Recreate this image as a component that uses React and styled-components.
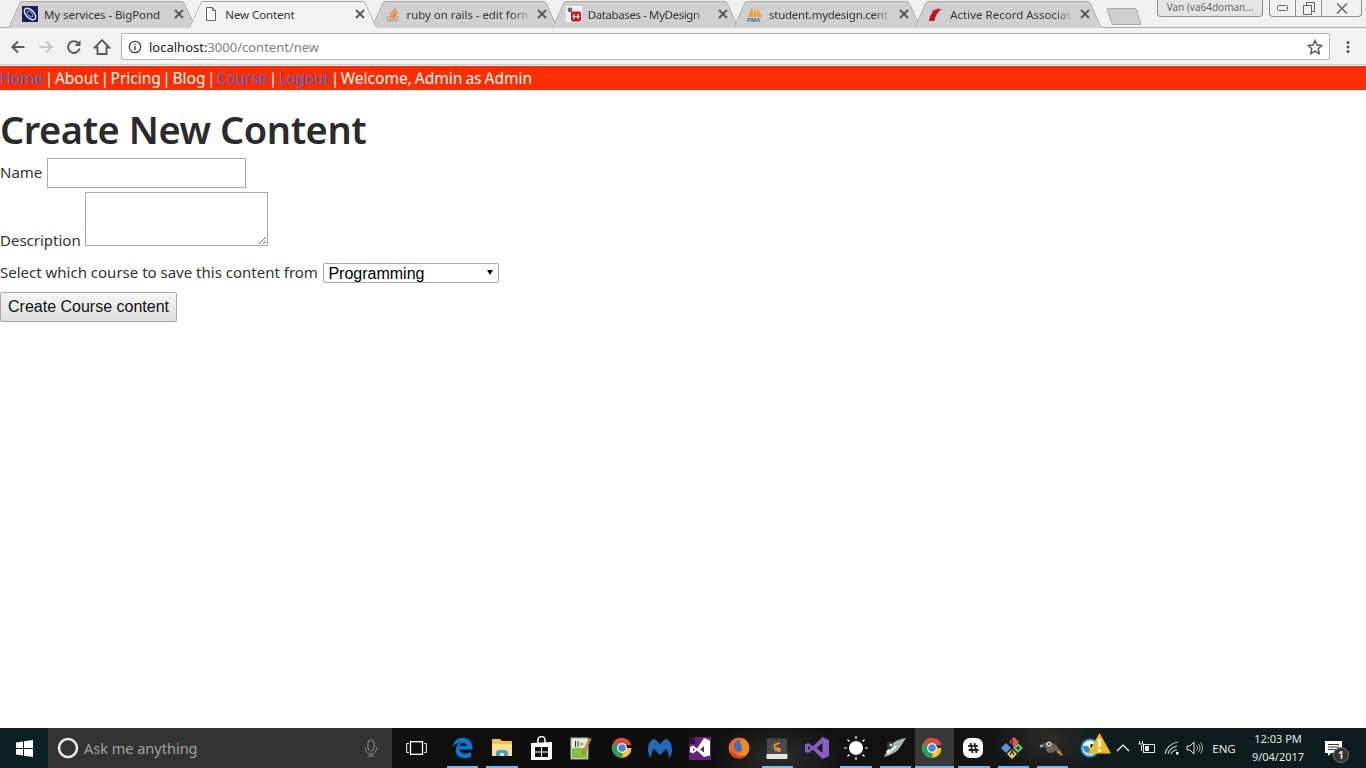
import React from "react"
import styled, { createGlobalStyle } from "styled-components"

const Global = createGlobalStyle`
html, body {
  margin: 0;
  padding: 0;
  background: #fff;
}
body {
  font-family: "Noto Sans", "Open Sans", sans-serif;
  overflow: hidden;
}
`

const Screen = styled.div`
  width: 1366px;
  height: 768px;
  display: flex;
  flex-direction: column;
  overflow: hidden;
`

/* browser chrome */
const TabStrip = styled.div`
  height: 28px;
  flex: none;
  display: flex;
  padding-left: 8px;
  background: #f1f1f1;
  box-sizing: border-box;
  position: relative;
`

const Tab = styled.div`
  width: 188px;
  height: 28px;
  flex: none;
  margin-right: -6.75px;
  box-sizing: border-box;
  padding: 0 10px 0 14px;
  display: flex;
  align-items: center;
  position: relative;
  z-index: ${p => (p.$active ? 2 : 1)};
  font-size: 11.5px;
  color: #333;

  &::before, &::after {
    content: "";
    position: absolute;
    top: 1px;
    bottom: 0;
    width: 55%;
    background: ${p => (p.$active ? "#f2f2f2" : "#d0d0d0")};
    border-top: 1px solid #a8a8a8;
    z-index: -1;
  }
  &::before {
    left: 0;
    transform: skewX(-24deg);
    transform-origin: bottom left;
    border-left: 1px solid #a0a0a0;
    border-radius: 3px 0 0 0;
  }
  &::after {
    right: 0;
    transform: skewX(24deg);
    transform-origin: bottom right;
    border-right: 1px solid #a0a0a0;
    border-radius: 0 3px 0 0;
  }
`

const Favicon = styled.span`
  width: 16px;
  height: 16px;
  flex: none;
  display: flex;
  margin-right: 6px;
  svg { display: block; }
`

const TabTitle = styled.span`
  flex: 1;
  min-width: 0;
  white-space: nowrap;
  letter-spacing: ${p => p.$track || 0}px;
  -webkit-mask-image: ${p => (p.$fade ? "linear-gradient(90deg, #000 85%, transparent)" : "none")};
  mask-image: ${p => (p.$fade ? "linear-gradient(90deg, #000 85%, transparent)" : "none")};
`

const TabClose = styled.span`
  width: 12px;
  height: 12px;
  flex: none;
  display: flex;
  margin-left: 5px;
  margin-right: 1px;
`

const NewTab = styled.div`
  width: 28px;
  height: 15px;
  margin: 8px 0 0 13px;
  flex: none;
  background: #d0d0d0;
  border: 1px solid #a8a8a8;
  border-radius: 2px;
  transform: skewX(18deg);
`

const WindowArea = styled.div`
  margin-left: auto;
  display: flex;
  align-items: flex-start;
  padding-right: 4px;
  position: relative;
  z-index: 3;
`

const UserBadge = styled.div`
  width: 106px;
  height: 17px;
  box-sizing: border-box;
  margin-right: 6px;
  border: 1px solid #8f8f8f;
  border-top: none;
  border-radius: 0 0 4px 4px;
  background: #e4e4e4;
  font-size: 10px;
  line-height: 15px;
  color: #5c5c5c;
  text-align: center;
  white-space: nowrap;
  overflow: hidden;
  text-shadow: 0 0 2px #fff;
`

const WinButtons = styled.div`
  width: 93px;
  height: 17px;
  box-sizing: border-box;
  display: grid;
  grid-template-columns: 25px 26px 1fr;
  border: 1px solid #8f8f8f;
  border-top: none;
  border-radius: 0 0 4px 4px;
  background: #f1f1f1;
`

const WinButton = styled.span`
  display: flex;
  align-items: center;
  justify-content: center;
  color: #666;
  & + & { border-left: 1px solid #8f8f8f; }
`

const Toolbar = styled.div`
  height: 38px;
  flex: none;
  box-sizing: border-box;
  background: #f2f2f2;
  border-top: 1px solid #a8a8a8;
  border-bottom: 1px solid #cfcfcf;
  display: flex;
  align-items: center;
  padding: 1px 4px 0;
  position: relative;
  margin-top: -1px;
`

const NavIcon = styled.span`
  width: 28px;
  height: 28px;
  flex: none;
  display: flex;
  align-items: center;
  justify-content: center;
  color: ${p => (p.$off ? "#c6c6c6" : "#5a5a5a")};
`

const Omnibox = styled.div`
  height: 27px;
  flex: 1;
  margin: 0 4px 0 5px;
  box-sizing: border-box;
  background: #fff;
  border: 1px solid #b4b4b4;
  border-radius: 2px;
  display: flex;
  align-items: center;
  padding: 0 6px;
  font-size: 13px;
`

const Host = styled.span`
  color: #222;
  margin-left: 7px;
`

const Path = styled.span`
  color: #808080;
`

const StarIcon = styled.span`
  margin-left: auto;
  display: flex;
  color: #555;
`

/* the page itself */
const TopNav = styled.div`
  height: 24px;
  flex: none;
  background: #ff2d00;
  color: #fff;
  font-size: 15.5px;
  line-height: 24px;
  white-space: pre;
  word-spacing: -2.5px;
  margin-top: 1px;
`

const NavLink = styled.a`
  color: #3c6fd6;
  letter-spacing: -0.2px;
`

const Greeting = styled.span`
  word-spacing: -1px;
`

const Content = styled.main`
  flex: 1;
  color: #333;
  font-size: 15px;
  background: #fff;
`

const Heading = styled.h1`
  margin: 0;
  height: 68px;
  box-sizing: border-box;
  padding-top: 13px;
  font-size: 38px;
  line-height: 52px;
  font-weight: 600;
  color: #2b2b2b;
  letter-spacing: -0.45px;
`

const Row = styled.div`
  display: flex;
  align-items: ${p => p.$align || "center"};
  margin-bottom: ${p => p.$gap || 0}px;
`

const Label = styled.label`
  margin-right: ${p => p.$space || 4.5}px;
  margin-bottom: ${p => p.$drop || 0}px;
  position: relative;
  top: ${p => (p.$lift ? -1 : 0)}px;
  line-height: 22px;
  white-space: nowrap;
`

const TextInput = styled.input`
  width: 199px;
  height: 30px;
  box-sizing: border-box;
  border: 1px solid #a9a9a9;
  padding: 0 2px;
  background: #fff;
`

const TextArea = styled.textarea`
  width: 183px;
  height: 54px;
  box-sizing: border-box;
  display: block;
  margin: 0;
  border: 1px solid #a9a9a9;
  padding: 2px;
`

const SelectBox = styled.span`
  display: block;
  position: relative;
  width: 176px;
  height: 20px;

  &::after {
    content: "";
    position: absolute;
    right: 6px;
    top: 7px;
    border-style: solid;
    border-width: 5px 3.5px 0;
    border-color: #000 transparent transparent;
    pointer-events: none;
  }
`

const Select = styled.select`
  width: 100%;
  height: 100%;
  display: block;
  box-sizing: border-box;
  appearance: none;
  font-family: "Liberation Sans", Arial, sans-serif;
  font-size: 16px;
  color: #000;
  background: #fff;
  border: 1px solid #a9a9a9;
  border-radius: 2px;
  padding: 0 0 0 4px;
`

const SubmitButton = styled.button`
  width: 177px;
  height: 30px;
  box-sizing: border-box;
  font-family: "Liberation Sans", Arial, sans-serif;
  font-size: 16px;
  color: #111;
  padding: 0;
  background: linear-gradient(#f6f6f6, #dedede);
  border: 1px solid #a9a9a9;
  border-radius: 2px;
`

/* windows taskbar */
const Taskbar = styled.footer`
  height: 40px;
  flex: none;
  display: flex;
  align-items: stretch;
  background:
    radial-gradient(ellipse 70px 40px at 780px 30px, #2b2b2b, transparent),
    radial-gradient(ellipse 60px 40px at 1050px 10px, #2c2a26, transparent),
    linear-gradient(90deg, #151515 0%, #0d0d0d 45%, #131313 70%, #0e1b1d 82%, #0c1c1e 100%);
  color: #fff;
`

const StartButton = styled.div`
  width: 48px;
  flex: none;
  background: #0c2024;
  display: flex;
  align-items: center;
  justify-content: center;
`

const SearchBox = styled.div`
  width: 344px;
  flex: none;
  background: #333;
  display: flex;
  align-items: center;
  padding: 0 14px 0 9px;
  box-sizing: border-box;
  font-size: 14.5px;
  color: #a2a2a2;
`

const SearchText = styled.span`
  margin-left: 5px;
  flex: 1;
`

const TaskView = styled.div`
  width: 51px;
  flex: none;
  display: flex;
  align-items: center;
  justify-content: center;
  padding-right: 2px;
  box-sizing: border-box;
`

const AppSlot = styled.div`
  width: 39.33px;
  flex: none;
  box-sizing: border-box;
  padding-left: ${p => p.$nudge || 0}px;
  padding-right: ${p => p.$pull || 0}px;
  display: flex;
  align-items: center;
  justify-content: center;
  position: relative;
  background: ${p => (p.$active ? "rgba(255,255,255,0.16)" : "transparent")};

  &::after {
    content: "";
    display: ${p => (p.$open ? "block" : "none")};
    position: absolute;
    left: ${p => (p.$active ? 0 : 4)}px;
    right: ${p => (p.$active ? 0 : 4)}px;
    bottom: 0;
    height: 2px;
    background: #76b9ed;
  }
`

const Tray = styled.div`
  margin-left: auto;
  padding-right: 14px;
  display: flex;
  align-items: center;
  position: relative;
`

const TrayIcon = styled.span`
  display: flex;
  align-items: center;
  justify-content: center;
  width: ${p => p.$w || 24}px;
  height: 40px;
  flex: none;
  box-sizing: border-box;
  padding-right: ${p => p.$pad || 0}px;
  position: relative;
`

const Lang = styled.span`
  font-size: 11.5px;
  width: 36px;
  text-align: center;
  color: #e6e6e6;
`

const Clock = styled.div`
  width: 72px;
  font-size: 11px;
  line-height: 18px;
  text-align: center;
  color: #e6e6e6;
`

const Notify = styled.div`
  width: 38px;
  height: 40px;
  display: flex;
  align-items: center;
  justify-content: center;
  position: relative;
`

const NotifyBadge = styled.span`
  position: absolute;
  right: 3px;
  bottom: 5px;
  width: 16px;
  height: 16px;
  border-radius: 50%;
  background: #333;
  border: 1px solid #777;
  box-sizing: border-box;
  font-size: 11px;
  line-height: 14px;
  font-weight: 700;
  text-align: center;
  color: #ddd;
`

const Warning = styled.span`
  position: absolute;
  left: 10px;
  top: 5px;
  display: flex;
`

/* icons */
const CloseX = () => (
  <svg width="12" height="12" viewBox="0 0 12 12"><path d="M2 2l8 8M10 2l-8 8" stroke="#555" strokeWidth="1.8" /></svg>
)

const BigPondIcon = () => (
  <svg width="16" height="16" viewBox="0 0 16 16"><rect width="16" height="16" fill="#1c1c5e" /><ellipse cx="8" cy="8" rx="7" ry="4" fill="none" stroke="#dfe3f2" strokeWidth="1.4" transform="rotate(45 8 8)" /><ellipse cx="8" cy="8" rx="3.6" ry="2" fill="none" stroke="#9aa4d8" strokeWidth="1" transform="rotate(45 8 8)" /></svg>
)

const PageIcon = () => (
  <svg width="16" height="16" viewBox="0 0 16 16"><path d="M3.5 1.5h6l3 3v10h-9zM9.5 1.5v3h3" fill="#fff" stroke="#666" /></svg>
)

const StackIcon = () => (
  <svg width="16" height="16" viewBox="0 0 16 16"><path d="M2.5 10v4.5h10V10" fill="none" stroke="#b0a595" strokeWidth="1.3" /><path d="M4.5 12.5h6M4.6 10.4l6 .5M5 8.2l5.8 1.6M6 6l5.2 3M7.6 4l4.2 4.2M9.6 2.2l3 5" stroke="#f48024" strokeWidth="1.2" fill="none" /></svg>
)

const DatabaseIcon = () => (
  <svg width="16" height="16" viewBox="0 0 16 16"><rect width="16" height="16" fill="#f2f2f2" /><circle cx="4" cy="4" r="2.4" fill="#666" /><rect x="5" y="5.5" width="10" height="10" rx="2" fill="#d8121c" /><path d="M8 8v5M12 8v5M6.5 10.5h7" stroke="#fff" strokeWidth="1.2" /></svg>
)

const PmaIcon = () => (
  <svg width="16" height="16" viewBox="0 0 16 16"><path d="M1 11L5 1l1.500 10zM6.500 11L8 1l2 10zM10.500 11L10 2l5 9z" fill="#f0a030" /><text x="0" y="16" fontSize="6" fontWeight="700" fill="#3f5fa8" fontFamily="Liberation Sans">PMA</text></svg>
)

const RailsIcon = () => (
  <svg width="16" height="16" viewBox="0 0 16 16"><path d="M1 15c.5-4 2-7 3.500-8.500L3.500 5 5 5.500 5.500 3.500 6.500 5 8 2.500 8.500 4 10.500 1.500 11 3.500 14.500 3C10 5.500 7.500 9 6.500 15z" fill="#c8101c" /></svg>
)

const Back = () => (
  <svg width="18" height="18" viewBox="0 0 18 18"><path d="M15.500 9H3M9 3.500L3.300 9 9 14.500" fill="none" stroke="currentColor" strokeWidth="1.900" /></svg>
)

const Forward = () => (
  <svg width="18" height="18" viewBox="0 0 18 18"><path d="M2.500 9H15M9 3.500L14.700 9 9 14.500" fill="none" stroke="currentColor" strokeWidth="1.900" /></svg>
)

const Reload = () => (
  <svg width="18" height="18" viewBox="0 0 18 18"><path d="M14.500 10.500A5.800 5.800 0 1 1 13 5" fill="none" stroke="currentColor" strokeWidth="2" /><path d="M15.500 2v6h-6z" fill="currentColor" /></svg>
)

const Home = () => (
  <svg width="18" height="18" viewBox="0 0 18 18"><path d="M9 2.200L1.800 9.500h2.700v6.500h9V9.500h2.700z" fill="none" stroke="currentColor" strokeWidth="1.900" strokeLinejoin="miter" /></svg>
)

const InfoIcon = () => (
  <svg width="14" height="14" viewBox="0 0 14 14"><circle cx="7" cy="7" r="5.700" fill="none" stroke="#444" strokeWidth="1.300" /><path d="M7 6v4.200M7 3.700v1.300" stroke="#444" strokeWidth="1.400" /></svg>
)

const Star = () => (
  <svg width="16" height="16" viewBox="0 0 16 16"><path d="M8 1.500l2 4.500 4.800.5-3.600 3.200 1 4.800L8 12.100l-4.200 2.400 1-4.800L1.200 6.500 6 6z" fill="none" stroke="currentColor" strokeWidth="1.400" /></svg>
)

const Kebab = () => (
  <svg width="4" height="14" viewBox="0 0 4 14"><circle cx="2" cy="2.500" r="1.500" fill="#555" /><circle cx="2" cy="7" r="1.500" fill="#555" /><circle cx="2" cy="11.500" r="1.500" fill="#555" /></svg>
)

const WinLogo = () => (
  <svg width="17" height="17" viewBox="0 0 17 17"><path d="M0 2.400L7 1.400v6.600H0zM8 1.200L17 0v8H8zM0 9h7v6.600L0 14.600zM8 9h9v8l-9-1.200z" fill="#fff" /></svg>
)

const Cortana = () => (
  <svg width="22" height="22" viewBox="0 0 22 22"><circle cx="11" cy="11" r="9" fill="none" stroke="#e8e8e8" strokeWidth="2.600" /></svg>
)

const Mic = () => (
  <svg width="14" height="18" viewBox="0 0 14 18"><rect x="4" y="1" width="6" height="11" rx="3" fill="none" stroke="#8e8e8e" /><path d="M1.500 8v1.500a5.500 5.500 0 0 0 11 0V8M7 15v2M3.500 17h7" fill="none" stroke="#8e8e8e" /></svg>
)

const TaskViewIcon = () => (
  <svg width="21" height="14" viewBox="0 0 21 14"><rect x="4.500" y=".7" width="12" height="12.600" fill="none" stroke="#fff" strokeWidth="1.300" /><path d="M2.700 2.500H.7v9h2M18.300 2.500h2v9h-2" fill="none" stroke="#fff" /></svg>
)

const Edge = () => (
  <svg width="21" height="22" viewBox="0 0 21 22"><path d="M.5 10C1.500 4 6 .8 11 .8c5.800 0 9.500 4.500 9.500 11.700H7.300c.4 4.200 6.200 5.300 11.700 2.500v5c-7 2.800-16.500.8-15-8.500.5-3 3-5.500 5-6-4 .6-6.500 2-8.500 4.500zM7.600 9h7.200c0-4-6.400-4-7.200 0z" fill="#0a78d7" /></svg>
)

const Explorer = () => (
  <svg width="22" height="20" viewBox="0 0 22 20"><path d="M1 1h8l2 2h10v14H1z" fill="#f0c050" /><path d="M1 6h20v12H1z" fill="#fbe08f" /><path d="M7 12h8l2 2v4h-4v-3H9v3H5v-4z" fill="#3aa3dc" /></svg>
)

const Store = () => (
  <svg width="21" height="24" viewBox="0 0 21 24"><path d="M7 7V4a3.500 3.500 0 0 1 7 0v3" fill="none" stroke="#fff" strokeWidth="1.500" /><path d="M0 7l21-1v17l-3 1H0z" fill="#fff" /><path d="M4 11h6v4.500H4zM11 11h6v4.500h-6zM4 16.500h6V21H4zM11 16.500h6V21h-6z" fill="#111" /></svg>
)

const Notepad = () => (
  <svg width="22" height="24" viewBox="0 0 22 24"><rect x="1" y="2" width="17" height="21" fill="#e4ecd4" stroke="#b0b0a0" /><path d="M2 12h15v10H2z" fill="#7ec23f" /><path d="M5.500 11V5M8 11V5M10 8h3" stroke="#333" /><path d="M12 17L19.500 2l1.800 1L14 18z" fill="#d89a30" stroke="#8a5a20" strokeWidth=".5" /></svg>
)

const Chrome = () => (
  <svg width="22" height="22" viewBox="0 0 22 22">
    <path d="M11 11L2.300 5.800A10 10 0 0 1 20.500 8H11z" fill="#dd4b3e" />
    <path d="M11 11L11.500 21A10 10 0 0 1 2.300 5.800z" fill="#2f9e4f" />
    <path d="M11 11h9.500A10 10 0 0 1 11.500 21z" fill="#fbc02d" />
    <circle cx="11" cy="11" r="5" fill="#fff" />
    <circle cx="11" cy="11" r="3.800" fill="#4a86e8" />
  </svg>
)

const Malware = () => (
  <svg width="24" height="20" viewBox="0 0 24 20"><path d="M0 12C0 5 3 1 7 1l5 5 5-5c4 0 7 4 7 11 0 3-1 6-3 8-.5-4-1.500-8-3-9l-6 6-6-6c-1.500 1-2.500 5-3 9-2-2-3-5-3-8z" fill="#2168b8" /></svg>
)

const VsBox = () => (
  <svg width="22" height="23" viewBox="0 0 22 23"><rect width="22" height="23" fill="#68217a" /><rect width="6" height="7" fill="#111" opacity=".7" /><path d="M1 10l3-1.500 4 3L15 1l6 2.500v15L15 20l-7-6.500-4 3-3-1.500zm3 1v3l2-1.500zm11-2l-4 3.500 4 3z" fill="#fff" /></svg>
)

const Firefox = () => (
  <svg width="22" height="22" viewBox="0 0 22 22"><circle cx="11" cy="11" r="10.500" fill="#e8672a" /><circle cx="12" cy="9" r="6" fill="#3a6fc0" /><path d="M14 1c5 2 8 7 7 12-1 4-4 7-8 8-5 1-10-2-12-7 3 3 7 4 10 2 3-1.500 4-5 2-8-1-1.500-2-3 1-7z" fill="#f08a24" /><path d="M1 14c2 5 7 8 12 7 2-.4 4-1.500 5-3-4 2-9 1-12-2-2-.5-3-1-5-2z" fill="#d94420" /></svg>
)

const Sublime = () => (
  <svg width="22" height="21" viewBox="0 0 22 21"><rect x="1" y=".5" width="20" height="16" rx="1" fill="#4a4a4a" /><path d="M.5 16h21v4a1 1 0 0 1-1 1h-19a1 1 0 0 1-1-1z" fill="#e4e4e4" /><path d="M14 5l-5.500 1.800v2.400l5 1.700v2.200L8 11.300" fill="none" stroke="#f09a2a" strokeWidth="1.700" /></svg>
)

const VsLogo = () => (
  <svg width="24" height="24" viewBox="0 0 24 24"><path d="M17.500 1L24 4v16l-6.500 3L8 13.500 3 17l-3-1.500v-7L3 7l5 3.500zM3 10v4l2.500-2zm14.500-3l-6 5 6 5z" fill="#8661c5" /></svg>
)

const Sun = () => (
  <svg width="24" height="24" viewBox="0 0 24 24"><circle cx="12" cy="12" r="7" fill="#fff" /><path d="M12 0v3M12 21v3M0 12h3M21 12h3M3.500 3.500l2 2M18.500 18.500l2 2M3.500 20.500l2-2M18.500 5.500l2-2" stroke="#fff" strokeWidth="1.200" /></svg>
)

const Swift = () => (
  <svg width="24" height="22" viewBox="0 0 24 22"><path d="M1 20L6 10c3-5 10-8 17-9-3 4-5 9-9 13-4 3-9 5-13 6z" fill="#a8b4b4" /><path d="M3 14l11-6-1 3-8 6z" fill="#e8eeee" /><path d="M5 5c3-1 6 1 5 4s-4 4-5 3-2-5 0-7z" fill="#3a3a3a" /><circle cx="8" cy="8" r="1.500" fill="#ddd" /></svg>
)

const Slack = () => (
  <svg width="22" height="22" viewBox="0 0 22 22"><rect x="1" y="1" width="20" height="20" rx="7" fill="#fff" /><path d="M8.500 6l2 10M12.500 6l2 10M6 8.800h10M6.600 13h10" stroke="#222" strokeWidth="1.800" /></svg>
)

const GitKraken = () => (
  <svg width="24" height="24" viewBox="0 0 24 24">
    <path d="M14 1l5 5-5 5-5-5z" fill="#e0575c" />
    <path d="M6 7l5 5-5 5-5-5z" fill="#5a94ea" />
    <path d="M18 7l5 5-5 5-5-5z" fill="#6cc05c" />
    <path d="M12 13l5 5-5 5-5-5z" fill="#f0d060" />
    <path d="M12 4v11M10 19l2-4 2 4" fill="none" stroke="#1c1c1c" strokeWidth="1.200" />
    <circle cx="18" cy="12" r="1.500" fill="#222" />
  </svg>
)

const Gimp = () => (
  <svg width="24" height="18" viewBox="0 0 24 18"><path d="M2 5c5-2 11-2 14 1l6 7-2 1-4-3c-1 3-6 4-9 2L5 8z" fill="#6b6255" /><circle cx="9" cy="5" r="2.500" fill="#ddd" /><circle cx="9" cy="5" r="1" fill="#111" /><circle cx="1.500" cy="7" r="1.500" fill="#bbb" /><path d="M17 12l5 4" stroke="#d89a30" strokeWidth="2" /></svg>
)

const SyncApp = () => (
  <svg width="20" height="20" viewBox="0 0 20 20"><circle cx="10" cy="10" r="9.500" fill="#2a8fd8" /><circle cx="10" cy="10" r="7.500" fill="#fff" /><path d="M3 8a7.500 7.500 0 0 0 14 4c-3 2-7 0-9-4z" fill="#2a8fd8" /><circle cx="12" cy="8" r="2" fill="#0d2a3a" /></svg>
)

const WarnIcon = () => (
  <svg width="23" height="21" viewBox="0 0 23 21"><path d="M11.500 0L23 20.500H0z" fill="#f5b921" /><path d="M11.500 6v8M11.500 16v3" stroke="#fff" strokeWidth="2.600" /></svg>
)

const Chevron = () => (
  <svg width="14" height="8" viewBox="0 0 14 8"><path d="M1 7l6-6 6 6" fill="none" stroke="#fff" strokeWidth="1.200" /></svg>
)

const Battery = () => (
  <svg width="18" height="14" viewBox="0 0 18 14"><rect x="5.500" y="3.500" width="11" height="8" fill="none" stroke="#e6e6e6" /><rect x="7" y="5" width="4" height="5" fill="#e6e6e6" /><path d="M1.500 0v3M4.500 0v3M.5 3h5v2H3.500v5" fill="none" stroke="#e6e6e6" /></svg>
)

const Wifi = () => (
  <svg width="16" height="14" viewBox="0 0 16 14"><path d="M1 13C2 7 7 2 14 1M4 13c1-4 5-7 9-8M7 13c1-2 3-4 6-4" fill="none" stroke="#ccc" strokeWidth="1.100" /><rect x="12" y="11" width="2.500" height="2.500" fill="#fff" /></svg>
)

const Volume = () => (
  <svg width="18" height="14" viewBox="0 0 18 14"><path d="M1 5h3l4-4v12L4 9H1z" fill="none" stroke="#e6e6e6" /><path d="M10.500 4.500a3.500 3.500 0 0 1 0 5M12.500 3a6 6 0 0 1 0 8M14.500 1.500a8.500 8.500 0 0 1 0 11" fill="none" stroke="#aaa" /></svg>
)

const ActionCenter = () => (
  <svg width="17" height="15" viewBox="0 0 17 15"><path d="M0 0h17v12H6l-3 3v-3H0z" fill="#fff" /><path d="M3 3.500h11M3 6h11M3 8.500h8" stroke="#333" /></svg>
)

const tabs = [
  { title: "My services - BigPond", icon: <BigPondIcon />, track: -0.08 },
  { title: "New Content", icon: <PageIcon />, active: true, track: -0.08 },
  { title: "ruby on rails - edit form", icon: <StackIcon />, fade: true, track: -0.05 },
  { title: "Databases - MyDesign", icon: <DatabaseIcon />, fade: true, track: -0.4 },
  { title: "student.mydesign.cent", icon: <PmaIcon />, fade: true, track: -0.25 },
  { title: "Active Record Associat", icon: <RailsIcon />, fade: true },
]

const apps = [
  { icon: <Edge />, open: true },
  { icon: <Explorer />, open: true },
  { icon: <Store /> },
  { icon: <Notepad /> },
  { icon: <Chrome />, nudge: 4 },
  { icon: <Malware />, nudge: 2 },
  { icon: <VsBox />, nudge: 3 },
  { icon: <Firefox />, nudge: 2 },
  { icon: <Sublime />, open: true },
  { icon: <VsLogo /> },
  { icon: <Sun />, open: true },
  { icon: <Swift />, open: true },
  { icon: <Chrome />, open: true, active: true, pull: 5 },
  { icon: <Slack />, open: true, pull: 2 },
  { icon: <GitKraken />, open: true, pull: 2 },
  { icon: <Gimp />, open: true, pull: 2 },
]

export default function App() {
  return (
    <Screen>
      <Global />
      <TabStrip>
        {tabs.map(tab => (
          <Tab key={tab.title} $active={tab.active}>
            <Favicon>{tab.icon}</Favicon>
            <TabTitle $fade={tab.fade} $track={tab.track}>{tab.title}</TabTitle>
            <TabClose><CloseX /></TabClose>
          </Tab>
        ))}
        <NewTab />
        <WindowArea>
          <UserBadge>Van (va64doman...</UserBadge>
          <WinButtons>
            <WinButton><svg width="11" height="6" viewBox="0 0 11 6"><rect x=".5" y=".5" width="10" height="5" rx="1" fill="none" stroke="currentColor" /></svg></WinButton>
            <WinButton><svg width="12" height="13" viewBox="0 0 12 13"><rect x="3.500" y=".5" width="8" height="9" fill="none" stroke="currentColor" /><rect x=".5" y="3.500" width="8" height="9" fill="#f1f1f1" stroke="currentColor" /></svg></WinButton>
            <WinButton><svg width="12" height="11" viewBox="0 0 12 11"><path d="M1 .5l10 10M11 .5l-10 10" stroke="currentColor" strokeWidth="1.500" /></svg></WinButton>
          </WinButtons>
        </WindowArea>
      </TabStrip>
      <Toolbar>
        <NavIcon><Back /></NavIcon>
        <NavIcon $off><Forward /></NavIcon>
        <NavIcon><Reload /></NavIcon>
        <NavIcon><Home /></NavIcon>
        <Omnibox>
          <InfoIcon />
          <Host>localhost:<Path>3000/content/new</Path></Host>
          <StarIcon><Star /></StarIcon>
        </Omnibox>
        <NavIcon><Kebab /></NavIcon>
      </Toolbar>
      <TopNav>
        <NavLink>Home</NavLink> | About | Pricing | Blog | <NavLink>Course</NavLink> | <NavLink>Logout</NavLink> | <Greeting>Welcome, Admin as Admin</Greeting>
      </TopNav>
      <Content>
        <Heading>Create New Content</Heading>
        <Row $gap={4}>
          <Label $lift>Name</Label>
          <TextInput />
        </Row>
        <Row $align="flex-end" $gap={16}>
          <Label $drop={-5}>Description</Label>
          <TextArea />
        </Row>
        <Row $gap={8}>
          <Label $lift $space={5.5}>Select which course to save this content from</Label>
          <SelectBox>
            <Select defaultValue="Programming">
              <option>Programming</option>
            </Select>
          </SelectBox>
        </Row>
        <SubmitButton>Create Course content</SubmitButton>
      </Content>
      <Taskbar>
        <StartButton><WinLogo /></StartButton>
        <SearchBox>
          <Cortana />
          <SearchText>Ask me anything</SearchText>
          <Mic />
        </SearchBox>
        <TaskView><TaskViewIcon /></TaskView>
        {apps.map((app, i) => (
          <AppSlot key={i} $open={app.open} $active={app.active} $nudge={app.nudge} $pull={app.pull}>{app.icon}</AppSlot>
        ))}
        <Tray>
          <TrayIcon $w={34} $pad={10}>
            <SyncApp />
            <Warning><WarnIcon /></Warning>
          </TrayIcon>
          <TrayIcon $w={22}><Chevron /></TrayIcon>
          <TrayIcon $w={26}><Battery /></TrayIcon>
          <TrayIcon $w={24}><Wifi /></TrayIcon>
          <TrayIcon $w={22}><Volume /></TrayIcon>
          <Lang>ENG</Lang>
          <Clock>12:03 PM<br />9/04/2017</Clock>
          <Notify>
            <ActionCenter />
            <NotifyBadge>1</NotifyBadge>
          </Notify>
        </Tray>
      </Taskbar>
    </Screen>
  )
}
